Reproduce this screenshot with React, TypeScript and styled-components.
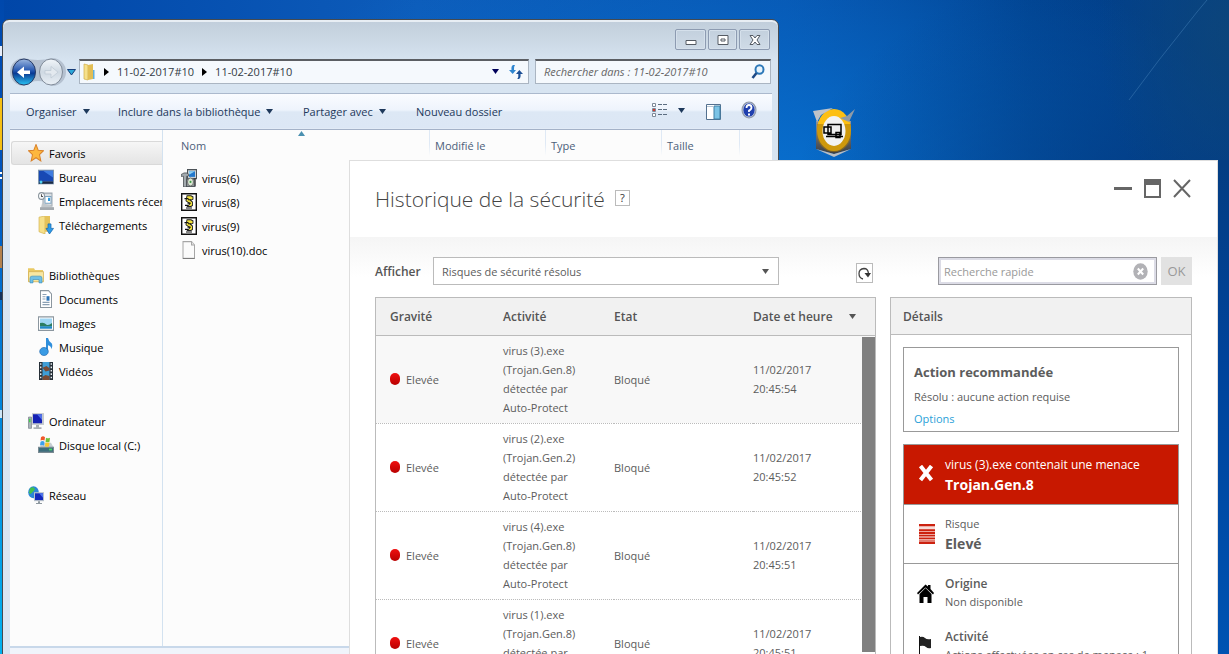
import React from "react";
import styled, { createGlobalStyle, css } from "styled-components";

const GlobalStyle = createGlobalStyle`
  * { box-sizing: border-box; }
  html, body, #root { height: 100%; }
  body { margin: 0; overflow: hidden; font-family: "Open Sans", "Noto Sans", sans-serif; font-size: 11px; }
  button, input, select { font: inherit; color: inherit; }
  button { padding: 0; border: 0; background: none; }
  table { border-collapse: collapse; border-spacing: 0; table-layout: fixed; }
  th, td { padding: 0; text-align: left; font-weight: inherit; }
  ul, h1, h2, h3, p { margin: 0; padding: 0; list-style: none; font-size: inherit; font-weight: inherit; }
`;

/* ---------- Desktop ---------- */

const Desktop = styled.main`
  position: relative;
  height: 100vh;
  overflow: hidden;
  background:
    radial-gradient(ellipse 130px 200px at 100% 5%, rgba(14, 70, 120, 0.8), rgba(14, 70, 120, 0) 100%),
    radial-gradient(ellipse 400px 260px at 97% 32%, #023c84 0%, rgba(2, 60, 132, 0) 100%),
    radial-gradient(ellipse 560px 300px at 60% 34%, #0874d4 0%, rgba(8, 116, 212, 0) 100%),
    linear-gradient(90deg, #0046a8 0%, #0d5cba 34%, #0753ae 64%, #01428f 84%, #034088 100%);
`;

const LeftEdge = styled.div`
  position: absolute;
  left: 0;
  top: 0;
  bottom: 0;
  width: 4px;
  background: linear-gradient(#0048ac 0%, #0056c0 28%, #007ad6 52%, #00b2f0 100%);
`;

const EdgePiece = styled.i<{ $top: number; $height: number; $color: string }>`
  position: absolute;
  left: 0;
  width: 2px;
  top: ${(p) => p.$top}px;
  height: ${(p) => p.$height}px;
  background: ${(p) => p.$color};
`;

const RightEdge = styled.div`
  position: absolute;
  right: 0;
  top: 160px;
  bottom: 0;
  width: 12px;
  background: linear-gradient(#033d82, #00439a 40%, #0053b2);
`;

const Streak = styled.svg`
  position: absolute;
  right: 0;
  top: 0;
`;

const Shortcut = styled.svg`
  position: absolute;
  left: 812px;
  top: 107px;
`;

/* ---------- Explorer window ---------- */

const Explorer = styled.section`
  position: absolute;
  left: 2px;
  right: 450px;
  top: 19px;
  bottom: -26px;
  display: flex;
  flex-direction: column;
  padding: 0 6px 0 7px;
  border: 1px solid #454a50;
  border-radius: 7px 7px 0 0;
  box-shadow: inset 0 2px 0 #e8eef4;
  background: linear-gradient(#c0cdda 0, #c6d3df 10px, #d7e4f1 42px, #d8e5f2 100%);
  color: #000;
`;

const TitleBar = styled.header`
  display: flex;
  justify-content: flex-end;
  gap: 2px;
  height: 39px;
  padding: 9px 2px 0 0;
`;

const CaptionButton = styled.button<{ $narrow?: boolean }>`
  width: ${(p) => (p.$narrow ? 29 : 31)}px;
  height: 21px;
  display: grid;
  place-items: center;
  border: 1px solid #8d9bb1;
  border-radius: 2px;
  background: linear-gradient(#c3d0dd, #cfdbe7);
  box-shadow: inset 0 0 0 1px #d5e0eb;
`;

const NavRow = styled.div`
  display: flex;
  align-items: center;
  height: 34px;
  padding: 0 1px 10px 0;
`;

const HistoryButtons = styled.div`
  display: flex;
  width: 69px;
  height: 30px;
  margin-top: 1px;
  flex: none;
`;

const fieldStyle = css`
  display: flex;
  align-items: center;
  height: 25px;
  border: 1px solid #aab5c2;
  border-top: 2px solid #5b5e63;
  background: #f5f9fd;
  color: #333b45;
`;

const AddressField = styled.nav`
  ${fieldStyle}
  flex: 1;
  padding: 0 4px 0 3px;
`;

const Crumb = styled.a`
  color: inherit;
  text-decoration: none;
  white-space: nowrap;
`;

const Arrow = styled.svg<{ $left?: number; $right?: number }>`
  flex: none;
  margin-left: ${(p) => p.$left ?? 0}px;
  margin-right: ${(p) => p.$right ?? 0}px;
`;

const Spacer = styled.span`
  flex: 1;
`;

const ExplorerSearch = styled.label`
  ${fieldStyle}
  width: 236px;
  margin-left: 6px;
  padding: 0 5px 0 8px;
  input {
    flex: 1;
    min-width: 0;
    padding: 0;
    border: 0;
    outline: 0;
    background: none;
    font-style: italic;
  }
  input::placeholder { color: #666; opacity: 1; }
`;

const CommandBar = styled.div`
  display: flex;
  align-items: center;
  height: 37px;
  padding: 0 15px 0 16px;
  border-top: 1px solid #abb9cd;
  border-bottom: 1px solid #a4b2c8;
  background: linear-gradient(#fafcff 0, #eef4fc 16px, #dde8f5 18px, #dce7f5 34px, #e8eff8 35px);
  color: #1e395b;
`;

const Command = styled.button<{ $width: number }>`
  display: flex;
  align-items: center;
  gap: 6px;
  width: ${(p) => p.$width}px;
  white-space: nowrap;
`;

const ExplorerBody = styled.div`
  display: flex;
  flex: 1;
  min-height: 0;
  background: #fcfcfc;
`;

const Sidebar = styled.aside`
  width: 153px;
  flex: none;
  overflow: hidden;
  padding: 11px 0 0 1px;
  border-right: 1px solid #d3e2f0;
`;

const TreeGroup = styled.ul`
  margin-bottom: 26px;
`;

const TreeItem = styled.li<{ $child?: boolean; $selected?: boolean }>`
  display: flex;
  align-items: center;
  gap: 5px;
  height: 24px;
  padding-left: ${(p) => (p.$child ? 27 : 17)}px;
  white-space: nowrap;
  svg { flex: none; }
  ${(p) =>
    p.$selected &&
    css`
      border: 1px solid #d9d9d9;
      padding-left: 16px;
      border-right: 0;
      border-radius: 3px 0 0 3px;
      background: linear-gradient(#f6f6f6, #e4e4e4);
    `}
`;

const Files = styled.div`
  flex: 1;
  position: relative;
`;

const FileTable = styled.table`
  width: 577px;
  thead th {
    height: 36px;
    padding: 0 0 6px 5px;
    color: #4c607a;
    background: linear-gradient(#dfe9f5, #dfe9f5 14px, #fcfcfc 26px) right top / 1px 100% no-repeat;
  }
  thead th:first-child { padding-left: 18px; }
  tbody td { height: 24px; padding-left: 18px; }
`;

const FileName = styled.span`
  display: flex;
  align-items: center;
  gap: 5px;
`;

const SortMark = styled.svg`
  position: absolute;
  left: 135px;
  top: 1px;
`;

const StatusBar = styled.footer`
  height: 33px;
  padding: 6px 0 0 17px;
  border-top: 2px solid #c8d8ea;
  background: #f0f4fb;
`;

/* ---------- Security history window ---------- */

const Security = styled.section`
  position: absolute;
  left: 349px;
  right: 11px;
  top: 160px;
  bottom: -60px;
  display: flex;
  flex-direction: column;
  border: 1px solid #dedede;
  background: #fff;
  color: #5c5c5c;
`;

const SecurityHeader = styled.header`
  display: flex;
  align-items: flex-start;
  height: 76px;
  padding: 18px 26px 0 25px;
`;

const SecurityTitle = styled.h1`
  font-size: 21px;
  line-height: 40px;
  font-weight: 300;
  color: #444;
`;

const HelpButton = styled.button`
  width: 15px;
  height: 16px;
  margin: 11px 0 0 10px;
  border: 1px solid #bbb;
  line-height: 12px;
  color: #333;
`;

const WindowButtons = styled.div`
  display: flex;
  gap: 12px;
  margin-left: auto;
  button { height: 20px; }
`;

const SecurityBody = styled.div`
  display: grid;
  grid-template-columns: minmax(0, 1fr) 302px;
  grid-template-rows: 28px minmax(0, 1fr);
  gap: 12px 14px;
  flex: 1;
  min-height: 0;
  padding: 20px 25px 0;
  background: linear-gradient(#f5f5f5, #fff 40px);
`;

const FilterRow = styled.div`
  display: flex;
  align-items: center;
  padding-right: 3px;
  label { width: 58px; font-size: 12px; font-weight: 600; color: #555; }
`;

const SelectBox = styled.span`
  position: relative;
  width: 346px;
  height: 28px;
  select {
    width: 100%;
    height: 100%;
    padding: 0 8px;
    appearance: none;
    border: 1px solid #bbb;
    border-radius: 0;
    background: #fff;
  }
  svg { position: absolute; right: 10px; top: 12px; }
`;

const RefreshButton = styled.button`
  display: grid;
  place-items: center;
  width: 17px;
  height: 20px;
  margin: 4px 0 0 auto;
  border: 1px solid #bbb;
  background: #fff;
`;

const SearchRow = styled.form`
  display: flex;
  justify-content: flex-end;
  gap: 4px;
`;

const SearchBox = styled.label`
  display: flex;
  align-items: center;
  width: 219px;
  height: 28px;
  padding: 0 8px 0 5px;
  border: 1px solid #9a9aa0;
  box-shadow: inset 0 0 0 2px #dcdce6;
  background: #fff;
  input { flex: 1; min-width: 0; padding: 0; border: 0; outline: 0; background: none; }
  input::placeholder { color: #999; opacity: 1; }
`;

const OkButton = styled.button`
  width: 31px;
  height: 28px;
  background: #e2e2e2;
  color: #999;
  font-size: 13px;
`;

const HistoryPanel = styled.div`
  position: relative;
  border: 1px solid #bbb;
  overflow: hidden;
`;

const HistoryTable = styled.table`
  width: 100%;
  thead th {
    height: 37px;
    border-bottom: 1px solid #bbb;
    background: #f1f1f1;
    font-size: 12px;
    font-weight: 600;
    color: #555;
  }
  tbody td {
    height: 88px;
    line-height: 19px;
    border-bottom: 1px dotted #bbb;
  }
  th:first-child, td:first-child { padding-left: 14px; }
  tbody tr:first-child td { background: #f8f8f8; }
`;

const Severity = styled.span`
  display: flex;
  align-items: center;
  gap: 6px;
  &::before {
    content: "";
    width: 10px;
    height: 12px;
    border-radius: 5px;
    background: linear-gradient(#f01010, #b80000);
  }
`;

const DateHeading = styled.span`
  display: flex;
  align-items: center;
  justify-content: space-between;
  padding-right: 19px;
`;

const ScrollThumb = styled.div`
  position: absolute;
  right: 0;
  top: 39px;
  width: 13px;
  height: 315px;
  background: #808080;
`;

const DetailsPanel = styled.aside`
  border: 1px solid #bbb;
  overflow: hidden;
`;

const DetailsHeading = styled.h2`
  height: 37px;
  padding-left: 12px;
  line-height: 37px;
  border-bottom: 1px solid #bbb;
  background: #f1f1f1;
  font-size: 12px;
  font-weight: 600;
  color: #555;
`;

const Card = styled.section`
  margin: 12px 12px 0;
  border: 1px solid #999;
`;

const ActionCard = styled(Card)`
  height: 85px;
  padding: 11px 0 0 10px;
  h3 { font-size: 13px; line-height: 26px; font-weight: 700; }
  p { line-height: 24px; }
  a { display: block; line-height: 20px; color: #2a9fd8; text-decoration: none; }
`;

const rowHeights = { alert: 60, risk: 59, info: 53 };

const ThreatRow = styled.div<{ $kind: "alert" | "risk" | "info" }>`
  display: flex;
  align-items: center;
  gap: 8px;
  height: ${(p) => rowHeights[p.$kind]}px;
  padding-left: 12px;
  border-bottom: ${(p) => (p.$kind === "info" ? "0" : "1px solid #999")};
  ${(p) => p.$kind === "alert" && css`background: #c81800; color: #fff; font-size: 12px;`}
  svg { flex: none; }
  p { line-height: ${(p) => (p.$kind === "info" ? 18 : 20)}px; white-space: nowrap; }
`;

const InfoList = styled.div`
  padding-top: 2px;
`;

const Strong = styled.p<{ $size: number }>`
  font-weight: ${(p) => (p.$size > 12 ? 700 : 600)};
  font-size: ${(p) => p.$size}px;
`;

/* ---------- Icons ---------- */

const Down = ({ color = "#1e395b" }: { color?: string }) => (
  <svg width="7" height="5" viewBox="0 0 8 5" preserveAspectRatio="none" aria-hidden>
    <path d="M0 0h8L4 5z" fill={color} />
  </svg>
);

const icons: Record<string, React.ReactNode> = {
  star: (
    <path d="M8 .5l2.200 5 5.300.5-4 3.500 1.300 5.500L8 12.200 3.200 15l1.300-5.500L.5 6l5.300-.5z" fill="#fdb73e" stroke="#d9822b" />
  ),
  desktop: (
    <>
      <path d="M0 1.500h16v13H0z" fill="#7e95ae" />
      <path d="M1 2.500h14v9.500H1z" fill="#1849b4" />
      <path d="M5 2.500h10v6z" fill="#3f7ce0" />
      <path d="M1 12h14v2H1z" fill="#1c2a44" />
      <circle cx="3" cy="12.500" r="1.500" fill="#4fd0f0" />
    </>
  ),
  recent: (
    <>
      <path d="M5 1h9v11H5z" fill="#d9dee2" stroke="#9aa4ad" />
      <path d="M7 4h6v6H7z" fill="#fff" stroke="#7fa4c0" />
      <path d="M10 5h2v3h-2z" fill="#2d9be0" />
      <path d="M4 10l-1 4h12l-1-2z" fill="#c2c8cc" />
      <path d="M2 13.500h14V16H2z" fill="#a4aaaf" />
      <circle cx="3.500" cy="3.500" r="3" fill="#f4f6f8" stroke="#8a949c" />
      <path d="M3.500 2v2H5" stroke="#555" fill="none" />
    </>
  ),
  downloads: (
    <>
      <path d="M1 1l6-1v16l-6-2z" fill="#f6e08a" stroke="#d0ae48" strokeWidth=".6" />
      <path d="M7 0h5v14H7z" fill="#e5c25a" />
      <path d="M10 7h3v4h2.500L11.500 16 8 11h2z" fill="#2e9be8" stroke="#1769b0" strokeWidth=".7" />
    </>
  ),
  library: (
    <>
      <path d="M0 2h6l1 1.500h8V14H0z" fill="#e9c964" />
      <path d="M.500 5h15v9H.5z" fill="#f7e7a2" stroke="#d2b052" strokeWidth=".7" />
      <path d="M2 15V11q0-2 2-2h8q2 0 2 2v4h-3v-3H5v3z" fill="#6fc0e6" stroke="#3b8fbe" strokeWidth=".6" />
    </>
  ),
  document: (
    <>
      <path d="M2.500.5h8l3 3v12h-11z" fill="#fff" stroke="#8b969f" />
      <path d="M4.500 4h4M4.500 6h3M4.500 8h3M4.500 11h7M4.500 13h7" stroke="#8ba0b4" />
      <path d="M8.500 5.500h3v4h-3z" fill="#2d74b8" />
    </>
  ),
  image: (
    <>
      <path d="M.500 2.500h15v12H.5z" fill="#fff" stroke="#8b969f" />
      <path d="M2 4h12v9H2z" fill="#9fd6f4" />
      <path d="M2 8q4-1 6 1t6-1v3H2z" fill="#2c7d62" />
      <path d="M2 11h12v2H2z" fill="#2388c8" />
    </>
  ),
  music: (
    <>
      <path d="M8 0h2q.5 3 4 5 1 2-.5 5-.5-3-3.500-3.500V12H8z" fill="#2f8fdc" />
      <ellipse cx="6" cy="12" rx="4.300" ry="3.600" fill="#3a9be4" stroke="#1d66ae" strokeWidth=".6" />
    </>
  ),
  video: (
    <>
      <path d="M1 0h14v16H1z" fill="#273038" />
      <path d="M4.500 0h7v16h-7z" fill="#3f9ed6" />
      <path d="M4.500 5l4-1.500 3 2v2l-4 1zM4.500 13l3-1.500 4 1V16h-7z" fill="#7a4a34" />
      <path d="M2.700 1v15M13.300 1v15" stroke="#e8eef2" strokeWidth="1.400" strokeDasharray="1.500 1.500" />
    </>
  ),
  computer: (
    <>
      <path d="M.500 4.500h3v10h-3z" fill="#aab3ba" stroke="#7c868e" strokeWidth=".7" />
      <path d="M1 6h1.500v3H1z" fill="#3ecf4a" />
      <path d="M4 1h12v10.500H4z" fill="#c4c9ce" />
      <path d="M5 2h9v8H5z" fill="#1420b4" />
      <path d="M9 2h5v5z" fill="#5070e8" />
      <path d="M8 11.500h3v2h2.500V15h-8v-1.500H8z" fill="#a9afb4" />
    </>
  ),
  disk: (
    <>
      <path d="M2 10l2-4h9l2.500 4z" fill="#c7ced3" />
      <path d="M.500 10h15v4.500H.5z" fill="#3d6d7c" stroke="#7b8a92" />
      <path d="M11 12h3" stroke="#49e060" strokeWidth="1.500" />
      <path d="M3 1q2-1.500 4 0L6.500 4q-2-1-4 0z" fill="#f0582a" />
      <path d="M8 1.500q2 1 4 0L11.500 5q-2 1-4 0z" fill="#6cc03a" />
      <path d="M2.500 5q2-1 4 0L6 8.500q-2-1-4 0z" fill="#3ba0ec" />
      <path d="M7.500 5.500q2 1 4 0L11 9q-2 1-4 0z" fill="#fbc62c" />
    </>
  ),
  network: (
    <>
      <circle cx="5.500" cy="5.500" r="5.300" fill="#2b86d8" />
      <path d="M2 2q4-2 5 1L4 6Q2 8 1 6zM7 7h3q0 3-3 3.500z" fill="#42c04e" />
      <path d="M6 5.500h10v8H6z" fill="#b7c1ca" />
      <path d="M7 6.500h8v6H7z" fill="#1428bc" />
      <path d="M11 6.500h4v4z" fill="#4e74ec" />
      <path d="M10 13.500h2v1.500h2v1H8v-1h2z" fill="#8e989f" />
    </>
  ),
  installer: (
    <>
      <path d="M6.500.5h9v8h-9z" fill="#c9d0d5" stroke="#4c5358" />
      <path d="M8 2h6v5H8z" fill="#2378cc" />
      <path d="M8 2h6L8 5z" fill="#8cd0f4" />
      <path d="M5 9h9v6.500H5z" fill="#8d9498" stroke="#555b60" />
      <path d="M0 5l3-1.500h3l2 1.500-1 1.500H5.500V16H2.500V6.500H0z" fill="#a3aaae" stroke="#3f4549" strokeWidth=".7" />
      <ellipse cx="9.500" cy="11.500" rx="3" ry="3.500" fill="#dbe8d4" stroke="#666" strokeWidth=".8" />
      <circle cx="9.500" cy="11.500" r="1" fill="#3f9a48" />
      <path d="M14 8v7" stroke="#333" />
    </>
  ),
  script: (
    <>
      <path d="M.700.700h14.600v14.600H.7z" fill="#fff" stroke="#111" strokeWidth="1.400" />
      <path d="M6 2.500h4l2 1v2l-2.500 1 2 1.500v3L10 12H6.500L9 9.500 5 7z" fill="#f2e23c" stroke="#222" strokeWidth=".9" />
      <path d="M3.500 5h4M7 6h3M6.500 9h3M4 11h3M5 13.300h6" stroke="#111" />
    </>
  ),
  page: (
    <>
      <path d="M2 .5h8.500l3 3v12H2z" fill="#fbfbfb" stroke="#a6a6a6" />
      <path d="M10.500.5v3h3" fill="#e2e2e2" stroke="#a6a6a6" />
      <path d="M2 15.500h11.500" stroke="#7b7b7b" />
    </>
  ),
};

const Icon = ({ name }: { name: string }) => (
  <svg width="16" height="18" viewBox="0 0 16 16" preserveAspectRatio="none" aria-hidden>
    {icons[name]}
  </svg>
);

/* ---------- Data ---------- */

const tree = [
  [["star", "Favoris"], ["desktop", "Bureau"], ["recent", "Emplacements récents"], ["downloads", "Téléchargements"]],
  [["library", "Bibliothèques"], ["document", "Documents"], ["image", "Images"], ["music", "Musique"], ["video", "Vidéos"]],
  [["computer", "Ordinateur"], ["disk", "Disque local (C:)"]],
  [["network", "Réseau"]],
];

const files = [
  ["installer", "virus(6)"],
  ["script", "virus(8)"],
  ["script", "virus(9)"],
  ["page", "virus(10).doc"],
];

const events = [
  { file: "virus (3).exe", threat: "(Trojan.Gen.8)", time: "20:45:54" },
  { file: "virus (2).exe", threat: "(Trojan.Gen.2)", time: "20:45:52" },
  { file: "virus (4).exe", threat: "(Trojan.Gen.8)", time: "20:45:51" },
  { file: "virus (1).exe", threat: "(Trojan.Gen.8)", time: "20:45:51" },
];

/* ---------- Windows ---------- */

const ExplorerWindow = () => (
  <Explorer>
    <TitleBar>
      <CaptionButton aria-label="Réduire">
        <svg width="12" height="12"><path d="M1 6.500h10v4H1z" fill="#fff" stroke="#555b63" /></svg>
      </CaptionButton>
      <CaptionButton $narrow aria-label="Agrandir">
        <svg width="12" height="12"><path d="M1 1.500h10v9H1z" fill="#fff" stroke="#555b63" /><path d="M4 5h4v2H4z" fill="#fff" stroke="#555b63" /></svg>
      </CaptionButton>
      <CaptionButton aria-label="Fermer">
        <svg width="12" height="12"><path d="M1 1.500h3l2 2.500 2-2.500h3L8 6l3 4.500H8L6 8l-2 2.500H1L4 6z" fill="#fff" stroke="#555b63" /></svg>
      </CaptionButton>
    </TitleBar>
    <NavRow>
      <HistoryButtons>
        <svg width="69" height="30" viewBox="0 0 69 30" aria-hidden>
          <defs>
            <linearGradient id="back" x1="0" y1="0" x2="0" y2="1">
              <stop offset="0" stopColor="#9db8e0" />
              <stop offset=".45" stopColor="#2456b0" />
              <stop offset=".55" stopColor="#0a3a94" />
              <stop offset="1" stopColor="#28c4f4" />
            </linearGradient>
            <linearGradient id="forward" x1="0" y1="0" x2="0" y2="1">
              <stop offset="0" stopColor="#f2f6fa" />
              <stop offset=".5" stopColor="#cfd9e3" />
              <stop offset="1" stopColor="#eaf0f6" />
            </linearGradient>
          </defs>
          <path d="M14 1q14 4 28 0a14 14 0 010 28q-14-10-28 0a14 14 0 010-28z" fill="#b5c1d0" />
          <ellipse cx="14" cy="15" rx="11.500" ry="13" fill="url(#back)" stroke="#283c66" />
          <path d="M20 13.500v3.500h-6v4l-7-5.800 7-5.700v4z" fill="#fff" />
          <ellipse cx="41" cy="15" rx="11.500" ry="13" fill="url(#forward)" stroke="#808b99" />
          <path d="M35 13.500v3.500h6v4l7-5.800-7-5.700v4z" fill="#e3e9ef" stroke="#bcc7d2" strokeWidth=".7" />
          <path d="M57.500 12.500h8l-4 5.500z" fill="#2ba7d8" stroke="#173d78" />
        </svg>
      </HistoryButtons>
      <AddressField aria-label="Adresse">
        <svg width="12" height="18" viewBox="0 0 12 18" aria-hidden>
          <path d="M1 1l4 1v15l-4-1z" fill="#f6e08a" stroke="#d0ae48" strokeWidth=".7" />
          <path d="M5 2l5-1v15l-5 1z" fill="#e2be55" />
          <path d="M10 7h1.500v9H10z" fill="#5fb0e0" />
        </svg>
        <Arrow $left={9} $right={8} width="5" height="8"><path d="M0 0l5 4-5 4z" fill="#000" /></Arrow>
        <Crumb href="#">11-02-2017#10</Crumb>
        <Arrow $left={8} $right={8} width="5" height="8"><path d="M0 0l5 4-5 4z" fill="#000" /></Arrow>
        <Crumb href="#">11-02-2017#10</Crumb>
        <Spacer />
        <Down color="#00005a" />
        <Arrow $left={9} width="16" height="16" viewBox="0 0 16 16">
          <path d="M5 1Q3 2 3.500 6H1l3.700 4L8 6H6Q5.500 3 7 1z" fill="#2f86d0" />
          <path d="M11 15q2-1 1.500-5H15l-3.700-4L8 10h2.300q.5 3-1 5z" fill="#1c4f96" />
        </Arrow>
      </AddressField>
      <ExplorerSearch>
        <input type="search" aria-label="Rechercher" placeholder="Rechercher dans : 11-02-2017#10" />
        <svg width="14" height="16" viewBox="0 0 14 16" aria-hidden>
          <ellipse cx="8.500" cy="5.500" rx="4" ry="4.300" fill="#e8f4fc" stroke="#2d78b8" strokeWidth="2" />
          <path d="M5.500 9L1.500 14" stroke="#1e4a86" strokeWidth="2.600" />
        </svg>
      </ExplorerSearch>
    </NavRow>
    <CommandBar>
      <Command $width={92}>Organiser <Down /></Command>
      <Command $width={185}>Inclure dans la bibliothèque <Down /></Command>
      <Command $width={113}>Partager avec <Down /></Command>
      <Command $width={100}>Nouveau dossier</Command>
      <Spacer />
      <button aria-label="Affichage">
        <svg width="34" height="14" viewBox="0 0 34 14">
          <path d="M.500.500h3v3h-3zM.500 5.500h3v3h-3zM.500 10.500h3v3h-3z" fill="#fff" stroke="#7d8998" />
          <path d="M1 6h2v2H1z" fill="#d23a2e" />
          <path d="M6 1.500h4m1 0h4M6 6.500h4m1 0h4M6 11.500h4m1 0h4" stroke="#5c6d80" />
          <path d="M26 5h7l-3.500 5z" fill="#1e395b" />
        </svg>
      </button>
      <Arrow $left={20} $right={20} width="15" height="16" viewBox="0 0 15 16">
        <path d="M.500.500h14v15H.5z" fill="#fff" stroke="#53708e" />
        <path d="M8 2h6v13H8z" fill="#7cc4e6" stroke="#3e7ea4" />
        <path d="M1 2.500h7" stroke="#b4c4d4" />
      </Arrow>
      <button aria-label="Aide">
        <svg width="16" height="18" viewBox="0 0 16 18">
          <ellipse cx="8" cy="9" rx="7.500" ry="8.500" fill="#8e98a8" />
          <ellipse cx="8" cy="9" rx="6" ry="7" fill="#1f3fae" stroke="#e0e6f0" strokeWidth=".6" />
          <path d="M5.500 7q0-3 2.500-3t2.500 2.500Q10.500 8.500 8 9.500v1.500" fill="none" stroke="#fff" strokeWidth="1.800" />
          <path d="M7 12.500h2v2H7z" fill="#fff" />
        </svg>
      </button>
    </CommandBar>
    <ExplorerBody>
      <Sidebar>
        {tree.map((group) => (
          <TreeGroup key={group[0][1]}>
            {group.map(([icon, label], i) => (
              <TreeItem key={label} $child={i > 0} $selected={label === "Favoris"}>
                <Icon name={icon} />
                {label}
              </TreeItem>
            ))}
          </TreeGroup>
        ))}
      </Sidebar>
      <Files>
        <SortMark width="7" height="5"><path d="M0 5l3.500-5L7 5z" fill="#4a90b0" /></SortMark>
        <FileTable>
          <colgroup>
            <col style={{ width: 267 }} />
            <col style={{ width: 116 }} />
            <col style={{ width: 116 }} />
            <col style={{ width: 78 }} />
          </colgroup>
          <thead>
            <tr><th>Nom</th><th>Modifié le</th><th>Type</th><th>Taille</th></tr>
          </thead>
          <tbody>
            {files.map(([icon, name]) => (
              <tr key={name}>
                <td><FileName><Icon name={icon} />{name}</FileName></td>
                <td /><td /><td />
              </tr>
            ))}
          </tbody>
        </FileTable>
      </Files>
    </ExplorerBody>
    <StatusBar>
      <svg width="40" height="20" aria-hidden><path d="M0 0l14 2v18H0z" fill="#f8ecb0" /></svg>
    </StatusBar>
  </Explorer>
);

const SecurityWindow = () => (
  <Security>
    <SecurityHeader>
      <SecurityTitle>Historique de la sécurité</SecurityTitle>
      <HelpButton aria-label="Aide">?</HelpButton>
      <WindowButtons>
        <button aria-label="Réduire"><svg width="18" height="19"><path d="M0 8h18v3H0z" fill="#666" /></svg></button>
        <button aria-label="Agrandir"><svg width="17" height="19"><path d="M1 1h15v17H1z" fill="none" stroke="#666" strokeWidth="2" /><path d="M0 0h17v6H0z" fill="#666" /></svg></button>
        <button aria-label="Fermer"><svg width="18" height="19"><path d="M1 1l16 17M17 1L1 18" stroke="#666" strokeWidth="2" /></svg></button>
      </WindowButtons>
    </SecurityHeader>
    <SecurityBody>
      <FilterRow>
        <label htmlFor="filter">Afficher</label>
        <SelectBox>
          <select id="filter"><option>Risques de sécurité résolus</option></select>
          <Down color="#555" />
        </SelectBox>
        <RefreshButton aria-label="Actualiser">
          <svg width="13" height="13" viewBox="0 0 13 13">
            <path d="M5 12Q1 11 1 6.500T6 1.500q4 0 4.500 5" fill="none" stroke="#444" strokeWidth="1.300" />
            <path d="M6.500 6h6.500l-3 4.500z" fill="#333" />
          </svg>
        </RefreshButton>
      </FilterRow>
      <SearchRow>
        <SearchBox>
          <input aria-label="Recherche rapide" placeholder="Recherche rapide" />
          <svg width="15" height="17" viewBox="0 0 15 17" aria-hidden>
            <ellipse cx="7.500" cy="8.500" rx="7.200" ry="8.200" fill="#b2b2b6" />
            <path d="M4.800 5.500l5.400 6M10.200 5.500l-5.400 6" stroke="#fff" strokeWidth="2" />
          </svg>
        </SearchBox>
        <OkButton type="button">OK</OkButton>
      </SearchRow>
      <HistoryPanel>
        <HistoryTable>
          <colgroup>
            <col style={{ width: 127 }} />
            <col style={{ width: 111 }} />
            <col style={{ width: 139 }} />
            <col />
          </colgroup>
          <thead>
            <tr>
              <th>Gravité</th><th>Activité</th><th>Etat</th>
              <th><DateHeading>Date et heure <Down color="#555" /></DateHeading></th>
            </tr>
          </thead>
          <tbody>
            {events.map((e) => (
              <tr key={e.file}>
                <td><Severity>Elevée</Severity></td>
                <td>{e.file}<br />{e.threat}<br />détectée par<br />Auto-Protect</td>
                <td>Bloqué</td>
                <td>11/02/2017<br />{e.time}</td>
              </tr>
            ))}
          </tbody>
        </HistoryTable>
        <ScrollThumb />
      </HistoryPanel>
      <DetailsPanel>
        <DetailsHeading>Détails</DetailsHeading>
        <ActionCard>
          <h3>Action recommandée</h3>
          <p>Résolu : aucune action requise</p>
          <a href="#">Options</a>
        </ActionCard>
        <Card>
          <ThreatRow $kind="alert">
            <svg width="21" height="20"><path d="M4.500 1l11 14M15.500 1l-11 14" stroke="#fff" strokeWidth="4" /></svg>
            <div>
              <p>virus (3).exe contenait une menace</p>
              <Strong $size={14}>Trojan.Gen.8</Strong>
            </div>
          </ThreatRow>
          <ThreatRow $kind="risk">
            <svg width="21" height="20">
              <path d="M3 0h16v20H3z" fill="#cc2210" />
              <path d="M3 3h16M3 4.500h16" stroke="#f8dcd8" strokeWidth="1.500" />
              <path d="M3 7.500h16M3 10.500h16M3 15.500h16" stroke="#eda79f" />
              <path d="M3 13h16" stroke="#e48a80" strokeWidth="2" />
              <path d="M3 17h16" stroke="#f8dcd8" />
            </svg>
            <div>
              <p>Risque</p>
              <Strong $size={14}>Elevé</Strong>
            </div>
          </ThreatRow>
          <InfoList>
            <ThreatRow $kind="info">
              <svg width="21" height="20" viewBox="0 0 21 20">
                <path d="M1 10L9.500 1.500l2.500 2V2h2.500v4L18 10l-1 1.500-7.500-7L2 11.500z" />
                <path d="M3.500 11l6-6 6 6v9h-4v-6H7.500v6h-4z" />
              </svg>
              <div>
                <Strong $size={12}>Origine</Strong>
                <p>Non disponible</p>
              </div>
            </ThreatRow>
            <ThreatRow $kind="info">
              <svg width="21" height="20" viewBox="0 0 21 20">
                <path d="M3.500 0v20" stroke="#111" />
                <path d="M4 1q3-1 5 1t6 1v9q-3 1-5-1t-6-1z" fill="#222" />
              </svg>
              <div>
                <Strong $size={12}>Activité</Strong>
                <p>Actions effectuées en cas de menace : 1</p>
              </div>
            </ThreatRow>
          </InfoList>
        </Card>
      </DetailsPanel>
    </SecurityBody>
  </Security>
);

export default function App() {
  return (
    <>
      <GlobalStyle />
      <Desktop>
        <LeftEdge>
          <EdgePiece $top={46} $height={10} $color="#e8eefa" />
          <EdgePiece $top={98} $height={52} $color="#f6c012" />
          <EdgePiece $top={172} $height={2} $color="#fff" />
          <EdgePiece $top={177} $height={2} $color="#fff" />
          <EdgePiece $top={246} $height={22} $color="#b4814c" />
          <EdgePiece $top={292} $height={8} $color="#14325c" />
          <EdgePiece $top={410} $height={8} $color="#cfe6f6" />
        </LeftEdge>
        <RightEdge />
        <Streak width="130" height="110" viewBox="0 0 130 110" aria-hidden>
          <path d="M108 0L98 12 60 60 30 100" fill="none" stroke="#4a86bc" strokeOpacity=".45" />
        </Streak>
        <Shortcut width="44" height="50" viewBox="0 0 44 50" aria-label="Norton">
          <defs>
            <linearGradient id="box" x1="0" y1="0" x2="0" y2="1">
              <stop offset="0" stopColor="#8f9399" />
              <stop offset="1" stopColor="#3a3d42" />
            </linearGradient>
          </defs>
          <path d="M4 14h35v28l-17 5-18-5z" fill="url(#box)" />
          <ellipse cx="22" cy="23" rx="17" ry="21" fill="#fdbf12" />
          <path d="M5 17h34v10a17 18 0 01-34 0z" fill="#a87808" opacity=".55" />
          <ellipse cx="22" cy="24" rx="11.500" ry="15" fill="#f2f2f2" />
          <path d="M1 4l20-3-12 7-4 7z" fill="#bfc3c8" />
          <path d="M43 2L37 15l-9-4 7-2z" fill="#8f9aa6" />
          <path d="M4 42l18 5 17-5-17 8z" fill="#b9bdc2" />
          <path d="M16 17.500h13v10H16zM12 20h7v6h-7zM14 29.500h17M24 25.500h4v5h-4z" fill="#eee" stroke="#000" strokeWidth="1.500" />
        </Shortcut>
        <ExplorerWindow />
        <SecurityWindow />
      </Desktop>
    </>
  );
}
